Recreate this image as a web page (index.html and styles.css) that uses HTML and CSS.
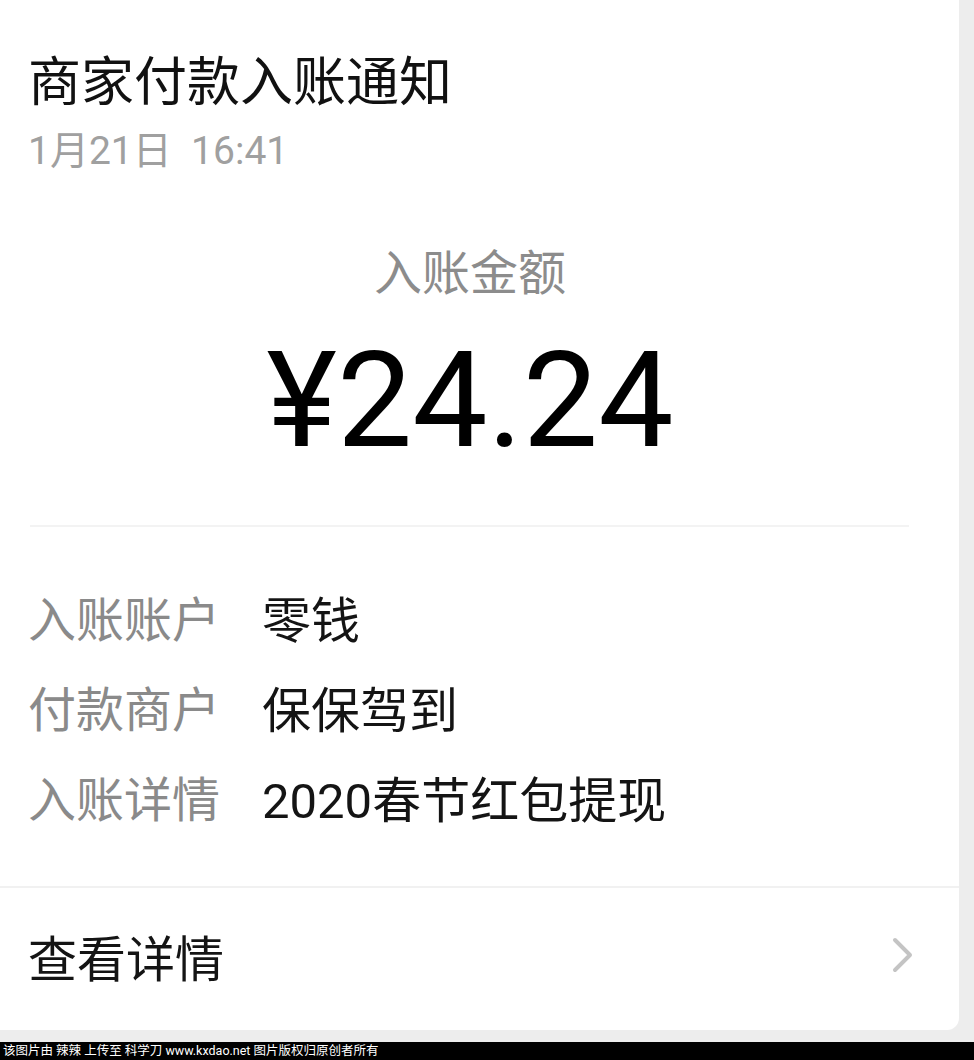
FILE: index.html
```html
<!DOCTYPE html>
<html lang="zh-CN">
<head>
    <meta charset="UTF-8">
    <meta name="viewport" content="width=device-width, initial-scale=1.0">
    <title>商家付款入账通知</title>
    <link rel="stylesheet" href="styles.css">
</head>
<body>
    <div class="page">
        <!-- Notice card -->
        <section class="card">
            <div class="head">
                <h1 class="title">商家付款入账通知</h1>
                <p class="date">1月21日&nbsp;&nbsp;16:41</p>
            </div>

            <div class="amount">
                <p class="amount-label">入账金额</p>
                <p class="amount-value">¥24.24</p>
            </div>

            <div class="divider"></div>

            <dl class="rows">
                <div class="row">
                    <dt>入账账户</dt>
                    <dd>零钱</dd>
                </div>
                <div class="row">
                    <dt>付款商户</dt>
                    <dd>保保驾到</dd>
                </div>
                <div class="row">
                    <dt>入账详情</dt>
                    <dd>2020春节红包提现</dd>
                </div>
            </dl>

            <a class="more" href="#">
                <span>查看详情</span>
                <svg class="chevron" width="24" height="38" viewBox="0 0 24 38">
                    <path d="M4 4 L19 19 L4 34" fill="none" stroke="#c4c4c4" stroke-width="4" stroke-linecap="round" stroke-linejoin="round"/>
                </svg>
            </a>
        </section>

        <footer class="watermark">该图片由 辣辣 上传至 科学刀 www.kxdao.net 图片版权归原创者所有</footer>
    </div>
</body>
</html>
```

FILE: styles.css
```css
/* General Styles */
* {
    box-sizing: border-box;
}
body {
    margin: 0;
    padding: 0;
    background-color: #ededed;
    font-family: Roboto, "Noto Sans CJK SC", sans-serif;
    color: #161616;
}
.page {
    width: 974px;
    height: 1060px;
    display: flex;
    flex-direction: column;
}

/* Card */
.card {
    width: 959px;
    height: 1030px;
    background: #fff;
    border-bottom-right-radius: 12px;
    display: flex;
    flex-direction: column;
}
.head {
    padding: 52px 28px 0;
}
.title {
    margin: 0;
    font-size: 53px;
    font-weight: 400;
    line-height: 62px;
    color: #111;
}
.date {
    margin: 17px 0 0;
    font-size: 39px;
    line-height: 40px;
    color: #a0a0a0;
}

/* Amount */
.amount {
    padding: 0 47px 0 28px;
    text-align: center;
}
.amount-label {
    margin: 75px 0 0;
    font-size: 48px;
    line-height: 56px;
    color: #8c8c8c;
}
.amount-value {
    margin: 32px 0 0;
    font-size: 134px;
    line-height: 134px;
    color: #000;
}
.divider {
    height: 2px;
    margin: 57px 50px 0 30px;
    background: #f3f3f3;
}

/* Detail rows */
.rows {
    margin: 44px 0 0;
    padding: 0 28px;
}
.row {
    display: flex;
    height: 90px;
    align-items: center;
}
.row dt {
    width: 234px;
    font-size: 48px;
    color: #8a8a8a;
}
.row dd {
    margin: 0;
    font-size: 49px;
    color: #141414;
}

/* View details */
.more {
    margin-top: 45px;
    border-top: 2px solid #f1f1f1;
    flex: 1;
    display: flex;
    align-items: center;
    justify-content: space-between;
    padding: 0 44px 8px 28px;
    font-size: 49px;
    color: #141414;
    text-decoration: none;
}
.chevron {
    display: block;
}

/* Watermark bar */
.watermark {
    margin-top: 12px;
    height: 18px;
    background: #000;
    color: #fff;
    font-size: 12.5px;
    line-height: 18px;
    padding-left: 3px;
    white-space: nowrap;
}
```
